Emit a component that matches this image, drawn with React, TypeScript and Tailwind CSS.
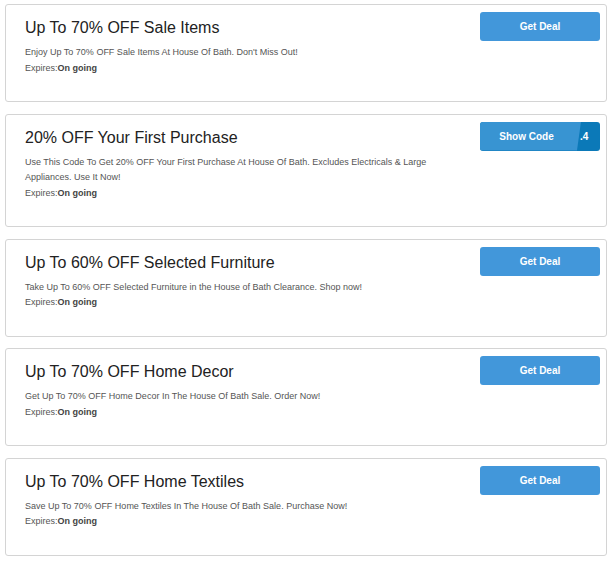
import React from "react";

type Deal = {
  title: string;
  desc: string;
  code?: boolean;
};

const deals: Deal[] = [
  { title: "Up To 70% OFF Sale Items", desc: "Enjoy Up To 70% OFF Sale Items At House Of Bath. Don't Miss Out!" },
  {
    title: "20% OFF Your First Purchase",
    desc: "Use This Code To Get 20% OFF Your First Purchase At House Of Bath. Excludes Electricals & Large Appliances. Use It Now!",
    code: true,
  },
  { title: "Up To 60% OFF Selected Furniture", desc: "Take Up To 60% OFF Selected Furniture in the House of Bath Clearance. Shop now!" },
  { title: "Up To 70% OFF Home Decor", desc: "Get Up To 70% OFF Home Decor In The House Of Bath Sale. Order Now!" },
  { title: "Up To 70% OFF Home Textiles", desc: "Save Up To 70% OFF Home Textiles In The House Of Bath Sale. Purchase Now!" },
];

function Card({ d }: { d: Deal }) {
  return (
    <div className="flex border border-[#d4d4d4] rounded-[3px] bg-white pl-[19px] pr-[6px] pt-[7px] pb-[25px]">
      <div className="w-[420px] pt-[6px]">
        <div className="text-[16px] leading-[20px] text-[#222]">{d.title}</div>
        <div className="mt-[7px] text-[9px] leading-[15.5px] text-[#555]">{d.desc}</div>
        <div className="text-[9px] leading-[15.5px] text-[#555]">
          Expires:<span className="font-bold text-[#444]">On going</span>
        </div>
      </div>
      <div className="flex-1" />
      {d.code ? (
        <div className="relative w-[120px] h-[29px] rounded-[3px] overflow-hidden bg-[#0b79b8]">
          <div
            className="absolute inset-0 bg-[#3894d2]"
            style={{ clipPath: "polygon(0 0, 101px 0, 97px 100%, 0 100%)" }}
          />
          <div className="absolute inset-y-0 left-0 w-[93px] flex items-center justify-center text-white text-[10px] font-bold">
            Show Code
          </div>
          <div className="absolute inset-y-0 left-[100px] flex items-center text-white text-[10px] font-bold">.4</div>
        </div>
      ) : (
        <div className="w-[120px] h-[29px] rounded-[3px] bg-[#4297da] flex items-center justify-center text-white text-[10px] font-bold">
          Get Deal
        </div>
      )}
    </div>
  );
}

export default function App() {
  return (
    <div
      className="bg-white w-[614px] h-[562px] pl-[5px] pr-[7px] pt-[4px] flex flex-col gap-[11.5px]"
      style={{ fontFamily: '"Liberation Sans", Arial, sans-serif' }}
    >
      {deals.map((d, i) => (
        <Card key={i} d={d} />
      ))}
    </div>
  );
}
